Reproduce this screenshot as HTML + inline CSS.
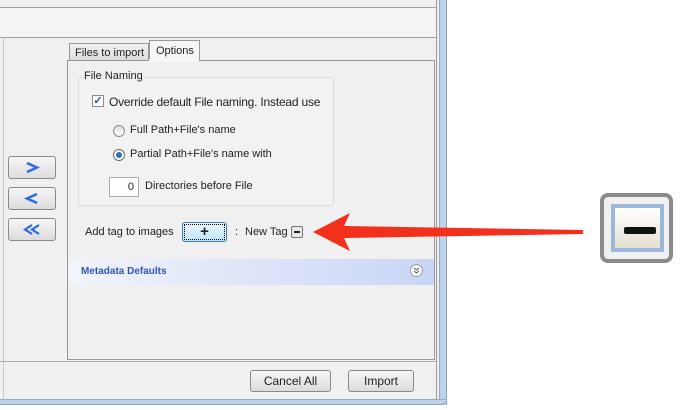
<!DOCTYPE html>
<html><head><style>
body{margin:0;width:686px;height:410px;background:#fff;position:relative;overflow:hidden;font-family:"Liberation Sans",sans-serif;font-size:11px;color:#222}
.a{position:absolute}
.btn{position:absolute;border:1px solid #8a8a8a;border-radius:3px;background:linear-gradient(#f6f6f6,#dcdcdc);box-sizing:border-box;text-align:center}
</style></head><body>
<div class="a" style="left:0;top:0;width:440px;height:402px;background:#f0f0f0"></div>
<div class="a" style="left:0;top:7px;width:437px;height:1px;background:#a0a0a0"></div>
<div class="a" style="left:0;top:8px;width:436px;height:29px;background:#f4f4f4"></div>
<div class="a" style="left:0;top:37px;width:437px;height:1px;background:#a0a0a0"></div>
<div class="a" style="left:436px;top:0;width:1px;height:400px;background:#9a9a9a"></div>
<div class="a" style="left:439px;top:0;width:8px;height:405px;background:#bcd2ec;border-left:1px solid #9ab;border-right:1px solid #8aa0b8;box-sizing:border-box"></div>
<div class="a" style="left:0;top:399px;width:447px;height:6px;background:#bcd2ec;border-bottom:1px solid #8aa0b8;border-top:1px solid #9ab;box-sizing:border-box;border-bottom-right-radius:6px"></div>
<div class="a" style="left:3px;top:38px;width:1px;height:362px;background:#c8c8c8"></div>
<!-- tabs -->
<div class="a" style="left:69px;top:43px;width:80px;height:17px;border:1px solid #999;border-bottom:none;background:linear-gradient(#f2f2f2,#dcdcdc);box-sizing:border-box;padding:3px 0 0 5px">Files to import</div>
<div class="a" style="left:149px;top:40px;width:51px;height:21px;border:1px solid #999;border-bottom:none;background:#f6f6f6;box-sizing:border-box;padding:4px 0 0 6px">Options</div>
<div class="a" style="left:67px;top:60px;width:368px;height:300px;border:1px solid #999;box-sizing:border-box;background:#f0f0f0"></div>
<div class="a" style="left:149px;top:59px;width:50px;height:3px;background:#f6f6f6"></div>
<!-- group -->
<div class="a" style="left:78px;top:77px;width:256px;height:129px;border:1px solid #dcdcdc;border-radius:3px;background:#f2f2f2;box-sizing:border-box"></div>
<div class="a" style="left:82px;top:70px;background:#f0f0f0;padding:0 2px">File Naming</div>
<div class="a" style="left:92px;top:95px;width:12px;height:12px;border:1px solid #8b8b8b;background:#fff;box-sizing:border-box;color:#2a4fa8;font-size:11px;line-height:10px;text-align:center;font-weight:bold">✓</div>
<div class="a" style="left:109px;top:95px;font-size:12px;letter-spacing:-0.2px">Override default File naming. Instead use</div>
<div class="a" style="left:113px;top:125px;width:12px;height:12px;border:1px solid #8b8b8b;border-radius:50%;background:linear-gradient(#ddd,#fff);box-sizing:border-box"></div>
<div class="a" style="left:130px;top:124px">Full Path+File's name</div>
<div class="a" style="left:113px;top:149px;width:12px;height:12px;border:1px solid #6a6a6a;border-radius:50%;background:#fff;box-sizing:border-box"><div class="a" style="left:2px;top:2px;width:6px;height:6px;border-radius:50%;background:#2c6fb8"></div></div>
<div class="a" style="left:130px;top:148px">Partial Path+File's name with</div>
<div class="a" style="left:109px;top:177px;width:30px;height:20px;border:1px solid #aaa;background:#fff;box-sizing:border-box;text-align:right;padding:3px 4px 0 0">0</div>
<div class="a" style="left:145px;top:180px">Directories before File</div>
<!-- side buttons -->
<div class="btn" style="left:8px;top:156px;width:48px;height:23px"><svg width="46" height="21"><path d="M18 6 L28 10.5 L18 15" fill="none" stroke="#2a6be0" stroke-width="2.5"/></svg></div>
<div class="btn" style="left:8px;top:187px;width:48px;height:23px"><svg width="46" height="21"><path d="M28 6 L18 10.5 L28 15" fill="none" stroke="#2a6be0" stroke-width="2.5"/></svg></div>
<div class="btn" style="left:8px;top:218px;width:48px;height:23px"><svg width="46" height="21"><path d="M23 6 L16 10.5 L23 15 M30 6 L23 10.5 L30 15" fill="none" stroke="#2a6be0" stroke-width="2.2"/></svg></div>
<!-- tag row -->
<div class="a" style="left:85px;top:226px">Add tag to images</div>
<div class="btn" style="left:182px;top:222px;width:45px;height:20px;border:1px solid #3c7fb1;background:linear-gradient(#eaf6fd,#bee6fd);font-weight:bold;font-size:15px;line-height:17px"><div class="a" style="left:1px;top:1px;right:1px;bottom:1px;border:1px dotted #000"></div>+</div>
<div class="a" style="left:235px;top:226px">:</div>
<div class="a" style="left:245px;top:226px">New Tag</div>
<div class="a" style="left:291px;top:226px;width:12px;height:12px;border:1px solid #777;border-radius:2px;background:#e8e8e8;box-sizing:border-box"><div class="a" style="left:2px;top:4px;width:6px;height:2px;background:#222"></div></div>
<!-- metadata -->
<div class="a" style="left:69px;top:259px;width:365px;height:26px;background:linear-gradient(90deg,#f2f4fb,#c9d6f5)"></div>
<div class="a" style="left:81px;top:266px;color:#2e56b8;font-weight:bold;font-size:10px">Metadata Defaults</div>
<div class="a" style="left:410px;top:264px;width:13px;height:13px;border:1px solid #99a;border-radius:50%;background:#fff;box-sizing:border-box"><svg class="a" style="left:0;top:0" width="11" height="11"><path d="M3 3 L5.5 5 L8 3 M3 6 L5.5 8 L8 6" fill="none" stroke="#556" stroke-width="1"/></svg></div>
<!-- bottom -->
<div class="a" style="left:0;top:361px;width:436px;height:1px;background:#aaa"></div>
<div class="btn" style="left:250px;top:370px;width:81px;height:22px;font-size:12px;line-height:20px">Cancel All</div>
<div class="btn" style="left:348px;top:370px;width:66px;height:22px;font-size:12px;line-height:20px">Import</div>
<!-- arrow -->
<svg class="a" style="left:0;top:0" width="686" height="410">
<polygon points="313,232 350,213 344,226 583,230 583,234 344,238 350,251" fill="#f2301b"/>
</svg>
<!-- zoomed icon -->
<div class="a" style="left:600px;top:193px;width:73px;height:70px;border:4px solid #8a8a8a;border-radius:8px;background:#f0f0f0;box-sizing:border-box"></div>
<div class="a" style="left:611px;top:204px;width:53px;height:48px;border:4px solid #9bb8dc;background:linear-gradient(#fff,#e4e0d0);box-sizing:border-box"></div>
<div class="a" style="left:624px;top:227px;width:32px;height:7px;background:#111;border-radius:2px"></div>
</body></html>
